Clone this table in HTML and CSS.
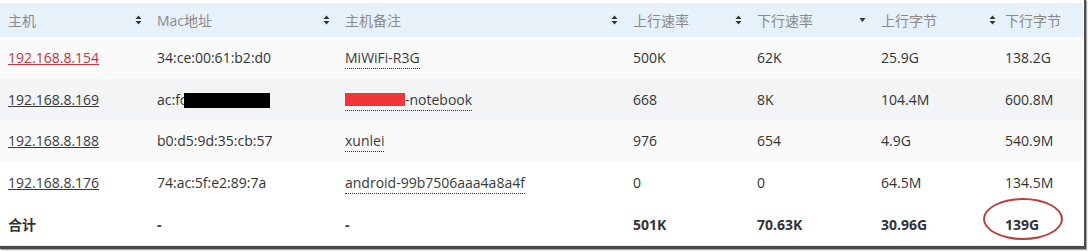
FILE: index.html
```html
<!DOCTYPE html>
<html lang="zh">
<head>
<meta charset="utf-8">
<title>主机流量</title>
<link rel="stylesheet" href="styles.css">
</head>
<body>
<div class="frame">
  <table class="hosts">
    <colgroup>
      <col class="c-host"><col class="c-mac"><col class="c-note"><col class="c-num"><col class="c-num"><col class="c-num"><col>
    </colgroup>
    <thead>
      <tr>
        <th><div class="th-in"><span>主机</span><svg class="sort" viewBox="0 0 7 10"><path d="M3.5 0.5 L6.5 4 L0.5 4 Z M3.5 9.5 L6.5 6 L0.5 6 Z"/></svg></div></th>
        <th><div class="th-in"><span>Mac地址</span><svg class="sort" viewBox="0 0 7 10"><path d="M3.5 0.5 L6.5 4 L0.5 4 Z M3.5 9.5 L6.5 6 L0.5 6 Z"/></svg></div></th>
        <th><div class="th-in"><span>主机备注</span><svg class="sort" viewBox="0 0 7 10"><path d="M3.5 0.5 L6.5 4 L0.5 4 Z M3.5 9.5 L6.5 6 L0.5 6 Z"/></svg></div></th>
        <th><div class="th-in"><span>上行速率</span><svg class="sort" viewBox="0 0 7 10"><path d="M3.5 0.5 L6.5 4 L0.5 4 Z M3.5 9.5 L6.5 6 L0.5 6 Z"/></svg></div></th>
        <th><div class="th-in"><span>下行速率</span><svg class="sort" viewBox="0 0 7 10"><path d="M0.5 3 L6.5 3 L3.5 7 Z"/></svg></div></th>
        <th class="th-tight"><div class="th-in"><span>上行字节</span><svg class="sort" viewBox="0 0 7 10"><path d="M3.5 0.5 L6.5 4 L0.5 4 Z M3.5 9.5 L6.5 6 L0.5 6 Z"/></svg></div></th>
        <th><div class="th-in"><span>下行字节</span></div></th>
      </tr>
    </thead>
    <tbody>
      <tr class="r1">
        <td><a class="ip ip-active" href="#">192.168.8.154</a></td>
        <td>34:ce:00:61:b2:d0</td>
        <td><a class="note" href="#">MiWiFi-R3G</a></td>
        <td>500K</td><td>62K</td><td>25.9G</td><td>138.2G</td>
      </tr>
      <tr class="r2">
        <td><a class="ip" href="#">192.168.8.169</a></td>
        <td>ac:fc<span class="redact-black"></span></td>
        <td><a class="note" href="#"><span class="redact-red"></span>-notebook</a></td>
        <td>668</td><td>8K</td><td>104.4M</td><td>600.8M</td>
      </tr>
      <tr class="r3">
        <td><a class="ip" href="#">192.168.8.188</a></td>
        <td>b0:d5:9d:35:cb:57</td>
        <td><a class="note" href="#">xunlei</a></td>
        <td>976</td><td>654</td><td>4.9G</td><td>540.9M</td>
      </tr>
      <tr class="r4">
        <td><a class="ip" href="#">192.168.8.176</a></td>
        <td>74:ac:5f:e2:89:7a</td>
        <td><a class="note" href="#">android-99b7506aaa4a8a4f</a></td>
        <td>0</td><td>0</td><td>64.5M</td><td>134.5M</td>
      </tr>
      <tr class="total">
        <td>合计</td><td>-</td><td>-</td>
        <td>501K</td><td>70.63K</td><td>30.96G</td><td>139G</td>
      </tr>
    </tbody>
  </table>
  <div class="circle"></div>
</div>
</body>
</html>
```
FILE: styles.css
```css
html, body {
  margin: 0;
  padding: 0;
  background: #ffffff;
}

body {
  width: 1088px;
  height: 251px;
  overflow: hidden;
  font-family: "Open Sans", "Noto Sans CJK SC", sans-serif;
  font-size: 14px;
  color: #333333;
}

.frame {
  position: relative;
  width: 1086px;
  height: 249px;
  box-sizing: border-box;
  padding-top: 3px;
  background: #ffffff;
  border-right: 2px solid #4d4d4d;
  border-bottom: 3px solid #4a4a4a;
  box-shadow: 1px 1px 1px rgba(0, 0, 0, 0.35);
}

.hosts {
  width: 1083px;
  border-collapse: collapse;
  table-layout: fixed;
  border-bottom: 1px solid #ececec;
}

.c-host { width: 149px; }
.c-mac { width: 188px; }
.c-note { width: 288px; }
.c-num { width: 124px; }

.hosts th {
  height: 34px;
  padding: 0 7px 0 8px;
  background: #e6f1fa;
  color: #8a8a8a;
  font-weight: normal;
  text-align: left;
  white-space: nowrap;
}

.hosts th.th-tight {
  padding-right: 1px;
}

.th-in {
  display: flex;
  align-items: center;
  justify-content: space-between;
}

.sort {
  width: 7px;
  height: 10px;
  fill: #333333;
  flex: none;
}

.hosts td {
  height: 41.6px;
  padding: 0 8px;
  white-space: nowrap;
  overflow: hidden;
}

.r1 td { background: #fafafa; }
.r2 td { background: #f2f4f6; }
.r3 td { background: #fafafa; }
.r4 td { background: #ffffff; }
.total td { background: #ffffff; font-weight: bold; }

.ip {
  color: #3a3a3a;
  text-decoration: underline;
}

.ip-active {
  color: #c8323a;
}

.note {
  color: #3a3a3a;
  text-decoration: none;
  border-bottom: 1px dotted #333333;
  padding-bottom: 1px;
}

.redact-black {
  display: inline-block;
  width: 86px;
  height: 15px;
  margin-left: -3px;
  vertical-align: -3px;
  background: #000000;
}

.redact-red {
  display: inline-block;
  width: 60px;
  height: 13px;
  vertical-align: -1px;
  background: #ef3535;
}

.circle {
  position: absolute;
  left: 983px;
  top: 198px;
  width: 80px;
  height: 42px;
  box-sizing: border-box;
  border: 2px solid #b8403f;
  border-radius: 50%;
}
```
